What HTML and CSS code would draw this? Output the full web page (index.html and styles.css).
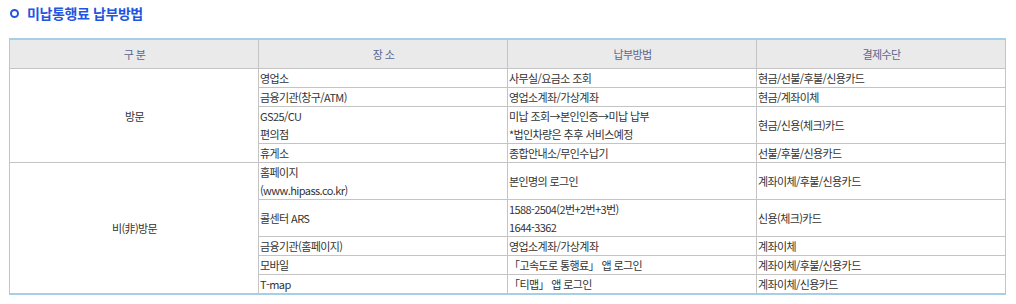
FILE: index.html
```html
<!DOCTYPE html>
<html lang="ko">
<head>
<meta charset="utf-8">
<link rel="stylesheet" href="styles.css">
</head>
<body>
<h3 class="title"><span class="dot"></span>미납통행료 납부방법</h3>
<table class="pay">
  <colgroup>
    <col class="c1"><col class="c2"><col class="c3"><col class="c4">
  </colgroup>
  <thead>
    <tr><th>구 분</th><th>장 소</th><th>납부방법</th><th>결제수단</th></tr>
  </thead>
  <tbody>
    <tr><td class="grp" rowspan="4">방문</td><td>영업소</td><td>사무실/요금소 조회</td><td>현금/선불/후불/신용카드</td></tr>
    <tr><td>금융기관(창구/ATM)</td><td>영업소계좌/가상계좌</td><td>현금/계좌이체</td></tr>
    <tr><td>GS25/CU<br>편의점</td><td>미납 조회→본인인증→미납 납부<br>*법인차량은 추후 서비스예정</td><td>현금/신용(체크)카드</td></tr>
    <tr><td>휴게소</td><td>종합안내소/무인수납기</td><td>선불/후불/신용카드</td></tr>
    <tr><td class="grp" rowspan="5">비(非)방문</td><td>홈페이지<br>(www.hipass.co.kr)</td><td>본인명의 로그인</td><td>계좌이체/후불/신용카드</td></tr>
    <tr><td>콜센터 ARS</td><td>1588-2504(2번+2번+3번)<br>1644-3362</td><td>신용(체크)카드</td></tr>
    <tr><td>금융기관(홈페이지)</td><td>영업소계좌/가상계좌</td><td>계좌이체</td></tr>
    <tr><td>모바일</td><td>「고속도로 통행료」 앱 로그인</td><td>계좌이체/후불/신용카드</td></tr>
    <tr><td>T-map</td><td>「티맵」 앱 로그인</td><td>계좌이체/신용카드</td></tr>
  </tbody>
</table>
</body>
</html>
```

FILE: styles.css
```css
html, body {
  margin: 0;
  padding: 0;
  background: #fff;
}
body {
  padding: 0 9px;
  font-family: "Noto Sans CJK KR", "Noto Sans", sans-serif;
}
.title {
  margin: 3px 0 15px 1px;
  height: 20px;
  display: flex;
  align-items: center;
  gap: 8px;
  font-size: 14px;
  line-height: 20px;
  font-weight: 700;
  color: #1f55e0;
  letter-spacing: -0.4px;
}
.dot {
  width: 5px;
  height: 5px;
  border: 2px solid #1f55e0;
  border-radius: 50%;
}
.pay {
  width: 997px;
  table-layout: fixed;
  border-collapse: collapse;
  border-top: 2px solid #a6cfe6;
  border-bottom: 2px solid #a6cfe6;
  font-size: 11px;
  line-height: 18px;
  color: #333;
  letter-spacing: -0.6px;
}
.c1, .c2, .c3, .c4 { width: 249px; }
.pay th, .pay td {
  border-left: 1px solid #c4c4c4;
  border-right: 1px solid #c4c4c4;
  border-bottom: 1px solid #c4c4c4;
  padding: 0 0 0 1px;
  vertical-align: middle;
  text-align: left;
  font-weight: 400;
}
.pay th {
  height: 28px;
  background: #eaeaea;
  color: #5a6690;
  text-align: center;
  font-size: 11px;
}
.pay tbody tr:last-child td {
  border-bottom: none;
}
.pay td.grp {
  text-align: center;
}
```
